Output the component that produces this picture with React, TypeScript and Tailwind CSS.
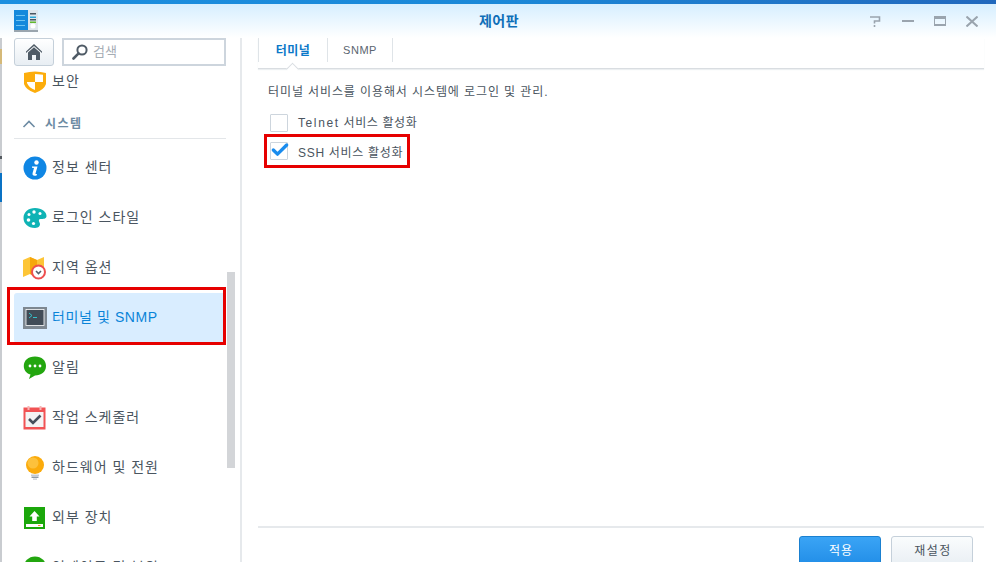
import { ReactNode } from 'react';
import { Check } from 'lucide-react';

const FONT = "font-['Liberation_Sans','Noto_Sans_CJK_KR',sans-serif]";

function ShieldIcon() {
  return (
    <svg width="24" height="24" viewBox="0 0 24 24">
      <path d="M1 3 Q12 0 23 3 V14 Q21 20 12 23 Q3 20 1 14 Z" fill="#fcad0c" />
      <path d="M12 4 L20 4.8 V12 H12 Z M12 12 V20 Q6 18 4 13 V12 Z" fill="#fff" />
    </svg>
  );
}

function InfoIcon() {
  return (
    <svg width="24" height="24" viewBox="0 0 24 24">
      <circle cx="12" cy="12" r="11.5" fill="#0f86e4" />
      <circle cx="13.5" cy="6.5" r="2.2" fill="#fff" />
      <path d="M9 10.5 H14.5 L12.5 17.5 Q12.3 18.4 14 18 L13.6 19.4 Q8.8 20.4 9.6 17 L11 12 L9 11.8 Z" fill="#fff" />
    </svg>
  );
}

function PaletteIcon() {
  return (
    <svg width="24" height="24" viewBox="0 0 24 24">
      <path d="M12 2 C19 2 23.5 6 23.5 10 C23.5 13 20 13 17.5 13 C15.5 13 15.5 15 16.5 16.5 C18 19 16 22 12 22 C5 22 0.5 17.5 0.5 12 C0.5 6 5.5 2 12 2 Z" fill="#0fb3b5" />
      <circle cx="5.5" cy="14" r="1.8" fill="#fff" />
      <circle cx="6" cy="8.5" r="1.5" fill="#fff" />
      <circle cx="11" cy="6" r="1.7" fill="#fff" />
      <circle cx="17" cy="7.5" r="1.5" fill="#fff" />
      <circle cx="10.5" cy="17.5" r="1.6" fill="#fff" />
    </svg>
  );
}

function MapIcon() {
  return (
    <svg width="24" height="24" viewBox="0 0 24 24">
      <path d="M0 4 L7 1 L14 4 L21 1 V17 L14 21 L7 18 L0 21 Z" fill="#fdc537" />
      <path d="M7 1 L14 4 V21 L7 18 Z" fill="#f6a70c" />
      <circle cx="15.5" cy="16" r="6.5" fill="#fff" stroke="#ee4f4f" strokeWidth="2" />
      <path d="M13 15 L15.5 17.5 L18 15" fill="none" stroke="#55606c" strokeWidth="1.6" />
    </svg>
  );
}

function TerminalIcon() {
  return (
    <svg width="24" height="24" viewBox="0 0 24 24">
      <rect width="24" height="22" y="1" fill="#7d8790" />
      <rect x="3" y="3.5" width="18" height="16" fill="#414c57" stroke="#fff" strokeWidth="0.8" />
      <path d="M6 7 L9 9.5 L6 12" fill="none" stroke="#35c3cc" strokeWidth="1" />
      <rect x="10" y="11" width="4" height="1" fill="#35c3cc" />
    </svg>
  );
}

function BubbleIcon() {
  return (
    <svg width="24" height="24" viewBox="0 0 24 24">
      <path d="M12 0.5 C19 0.5 23 4.5 23 10 C23 16 18 19.5 12 19.5 L6 23 L7.5 18.6 C3 17 0.8 14 0.8 10 C0.8 4.5 5 0.5 12 0.5 Z" fill="#23a60f" />
      <circle cx="7" cy="10" r="1.4" fill="#fff" />
      <circle cx="12" cy="10" r="1.4" fill="#fff" />
      <circle cx="17" cy="10" r="1.4" fill="#fff" />
    </svg>
  );
}

function CalendarIcon() {
  return (
    <svg width="24" height="24" viewBox="0 0 24 24">
      <rect x="0.5" y="1.5" width="22" height="22" fill="#f15354" />
      <rect x="2.5" y="6" width="18" height="15" fill="#f4f4f4" />
      <rect x="4.5" y="0" width="2" height="4" fill="#f8b3b3" />
      <rect x="16.5" y="0" width="2" height="4" fill="#f8b3b3" />
      <path d="M6 13 L10 17 L17.5 9.5" fill="none" stroke="#454f5b" strokeWidth="2.6" />
    </svg>
  );
}

function BulbIcon() {
  return (
    <svg width="24" height="24" viewBox="0 0 24 24">
      <circle cx="12" cy="9" r="9" fill="#fbab0b" />
      <circle cx="10" cy="7" r="5.5" fill="#fdc13c" />
      <rect x="8" y="18.5" width="8" height="1.5" fill="#c2c9d0" />
      <rect x="8.5" y="20.5" width="7" height="1.5" fill="#8f9aa5" />
      <rect x="10" y="22.5" width="4" height="1.2" fill="#c2c9d0" />
    </svg>
  );
}

function UploadIcon() {
  return (
    <svg width="24" height="24" viewBox="0 0 24 24">
      <rect x="1" y="1" width="21" height="22" fill="#1ba70b" />
      <path d="M11.5 5 L16.5 10.5 H13.8 V15 H9.2 V10.5 H6.5 Z" fill="#fff" />
      <rect x="3" y="18" width="17" height="3" fill="#fff" />
      <rect x="15" y="19" width="2.5" height="1" fill="#f0a020" />
    </svg>
  );
}

function DotIcon() {
  return (
    <svg width="24" height="24" viewBox="0 0 24 24">
      <circle cx="12" cy="12" r="11.5" fill="#23a60f" />
    </svg>
  );
}

function AppLogo() {
  return (
    <svg width="24" height="22" viewBox="0 0 24 22">
      <rect x="0" y="0" width="14" height="20" fill="#1589dc" />
      <rect x="14" y="0" width="10" height="20" fill="#dfe6ec" />
      <rect x="2" y="5" width="9" height="1" fill="#6fc4f2" />
      <rect x="2" y="10" width="9" height="1" fill="#6fc4f2" />
      <rect x="2" y="15" width="9" height="1" fill="#6fc4f2" />
      <rect x="16" y="3" width="6" height="1.5" fill="#4a5560" />
      <rect x="16" y="6.5" width="6" height="1.5" fill="#2aa7d8" />
      <rect x="16" y="9" width="6" height="1.5" fill="#4a5560" />
      <rect x="16" y="11.5" width="6" height="1.5" fill="#63b82e" />
      <circle cx="19" cy="16" r="2.5" fill="#fff" />
      <rect x="0" y="20" width="24" height="2" fill="#9aa5ae" />
    </svg>
  );
}

function HomeIcon() {
  return (
    <svg width="16" height="16" viewBox="0 0 16 16">
      <path d="M8 0 L16 7.5 V9 L8 2 L0 9 V7.5 Z" fill="#4f5b66" />
      <path d="M8 3.2 L14 8.6 V16 H10 V11 H6 V16 H2 V8.6 Z" fill="#4f5b66" />
    </svg>
  );
}

function SearchGlyph() {
  return (
    <svg width="16" height="16" viewBox="0 0 16 16" fill="none" stroke="#4f5b66">
      <circle cx="10" cy="6" r="4.6" strokeWidth="2" />
      <path d="M6.6 9.4 L1.5 14.5" strokeWidth="2.6" strokeLinecap="round" />
    </svg>
  );
}

function MenuItem({ icon, label, active }: { icon: ReactNode; label: string; active?: boolean }) {
  return (
    <div className={`h-[50px] flex items-center rounded-[3px] pl-[9px] gap-[5px] ${active ? 'bg-[#d9edff] text-[#0a84d8]' : 'text-[#4a5560]'}`}>
      <div className="w-[24px] h-[24px] flex items-center justify-center shrink-0">{icon}</div>
      <span className={`text-[14px] pb-[2px] whitespace-nowrap ${active ? 'tracking-[0.6px]' : 'tracking-[1px]'}`}>{label}</span>
    </div>
  );
}

export default function App() {
  return (
    <div className={`${FONT} w-[996px] h-[562px] overflow-hidden bg-white flex flex-col`}>
      <div className="h-[4px] shrink-0 bg-gradient-to-r from-[#1b8fe0] via-[#1a88d8] to-[#2168bd]" />

      {/* title bar */}
      <div className="h-[34px] shrink-0 bg-gradient-to-b from-[#d6eeff] to-[#ffffff] flex items-center pl-[14px] pr-[18px]">
        <div className="w-[166px]">
          <AppLogo />
        </div>
        <div className="flex-1 text-center text-[14px] font-bold text-[#0f6fb8] tracking-[0.5px]">제어판</div>
        <div className="w-[160px] flex items-center justify-end gap-[20px]">
          <svg width="12" height="11" viewBox="0 0 12 11" fill="none" stroke="#9aa4ae" strokeWidth="1.6" className="-translate-x-[1px]">
            <path d="M1 1 H10.5 V5 H5.5 V7.5" />
            <path d="M5.5 9 V11" />
          </svg>
          <span className="w-[12px] h-[2px] bg-[#9aa4ae]" />
          <span className="w-[12px] h-[10px] border border-[#9aa4ae] border-t-[3px] border-b-[2px]" />
          <svg width="12" height="11" viewBox="0 0 12 11" stroke="#9aa4ae" strokeWidth="2">
            <path d="M0.5 0.5 L11.5 10.5 M11.5 0.5 L0.5 10.5" />
          </svg>
        </div>
      </div>

      <div className="flex-1 flex min-h-0">
        {/* sidebar */}
        <div className="w-[242px] shrink-0 border-l-2 border-r-2 border-l-[#c9ccd0] border-r-[#e6e9ec] flex flex-col pl-[12px] relative">
          {/* desktop showing through at the window edge */}
          <div className="absolute left-[-2px] top-[11px] w-[2px] h-[15px] bg-[#d5b978]" />
          <div className="absolute left-[-2px] top-[118px] w-[2px] h-[3px] bg-[#555b60]" />
          <div className="absolute left-[-2px] top-[135px] w-[2px] h-[29px] bg-[#0a72c4]" />

          <div className="h-[28px] shrink-0 flex gap-[8px] pr-[14px]">
            <button className="w-[40px] h-[28px] border border-[#c5d0da] rounded-[3px] bg-gradient-to-b from-[#ffffff] to-[#e8eef3] flex items-center justify-center">
              <HomeIcon />
            </button>
            <div className="w-[164px] h-[28px] border-2 border-[#cdd5dd] flex items-center pl-[8px] gap-[5px]">
              <SearchGlyph />
              <span className="text-[13px] text-[#a5adb5]">검색</span>
            </div>
          </div>

          <div className="flex-1 min-h-0 overflow-hidden pr-[14px]">
            <div className="-mt-[9px]">
              <MenuItem icon={<ShieldIcon />} label="보안" />
              <div className="h-[32px] mb-[4px] flex items-center pl-[8px] gap-[9px] pt-[3px] border-b border-[#e3e6e9] text-[#6d8ba3] font-bold text-[12px] tracking-[1.5px]">
                <svg width="14" height="8" viewBox="0 0 14 8" fill="none" stroke="#6d8ba3" strokeWidth="1.6">
                  <path d="M1.5 7 L7 1.5 L12.5 7" />
                </svg>
                <span>시스템</span>
              </div>
              <MenuItem icon={<InfoIcon />} label="정보 센터" />
              <MenuItem icon={<PaletteIcon />} label="로그인 스타일" />
              <MenuItem icon={<MapIcon />} label="지역 옵션" />
              <MenuItem icon={<TerminalIcon />} label="터미널 및 SNMP" active />
              <MenuItem icon={<BubbleIcon />} label="알림" />
              <MenuItem icon={<CalendarIcon />} label="작업 스케줄러" />
              <MenuItem icon={<BulbIcon />} label="하드웨어 및 전원" />
              <MenuItem icon={<UploadIcon />} label="외부 장치" />
              <MenuItem icon={<DotIcon />} label="업데이트 및 복원" />
            </div>
          </div>

          {/* scrollbar */}
          <div className="absolute left-[225px] top-[234px] w-[8px] h-[196px] bg-[#d3d5d8]" />
          {/* red highlight */}
          <div className="absolute left-[5px] top-[249px] w-[219px] h-[58px] border-[3px] border-[#e60000]" />
        </div>

        {/* content */}
        <div className="flex-1 min-w-0 flex flex-col pl-[16px] pr-[12px]">
          <div className="h-[31px] shrink-0 border-b border-[#d9dde1] shadow-[0_1px_1px_#eceff1] flex relative">
            <div className="h-[24px] w-[70px] pt-[1px] border-l border-r border-[#dfe4e8] flex items-center justify-center text-[12px] font-bold text-[#0a78c8] tracking-[0.5px]">터미널</div>
            <div className="h-[24px] w-[65px] pt-[1px] border-r border-[#dfe4e8] flex items-center justify-center text-[11px] text-[#5a6570] tracking-[0.5px]">SNMP</div>
            <div className="absolute left-[30px] bottom-[-1px] w-[9px] h-[9px] rotate-45 translate-y-[4.5px] bg-white border-l border-t border-[#d9dde1]" />
          </div>

          <p className="mt-[14px] ml-[10px] text-[12px] text-[#4a5560] tracking-[0.9px]">터미널 서비스를 이용해서 시스템에 로그인 및 관리.</p>

          <div className="mt-[13px] ml-[12px] flex items-center gap-[10px] h-[18px]">
            <div className="w-[18px] h-[18px] border border-[#cdd5dd] rounded-[1px]" />
            <span className="text-[12px] text-[#4a5560] tracking-[0.6px]"><span className="tracking-[1.6px]">Telnet</span> 서비스 활성화</span>
          </div>

          <div className="relative mt-[2px] ml-[6px] w-[146px] h-[34px] border-[3px] border-[#e60000] flex items-center pl-[3px] gap-[10px]">
            <div className="relative w-[18px] h-[18px] border border-[#cdd5dd] rounded-[1px]">
              <Check size={20} strokeWidth={4} className="absolute left-[-1px] top-[-3px] text-[#1a8cee]" />
            </div>
            <span className="pt-[3px] text-[12px] text-[#4a5560] tracking-[0.7px] whitespace-nowrap">SSH 서비스 활성화</span>
          </div>

          <div className="flex-1" />

          <div className="h-[36px] shrink-0 border-t-2 border-[#e6e9ec] flex justify-end gap-[10px] pt-[8px] pr-[11px]">
            <button className="w-[82px] h-[32px] rounded-t-[3px] border border-[#1a80d0] bg-gradient-to-b from-[#3aa4f5] to-[#1f8ce6] text-white text-[12px] tracking-[1px] pl-[2px] pb-[3px]">적용</button>
            <button className="w-[82px] h-[32px] rounded-t-[3px] border border-[#c5d0da] bg-gradient-to-b from-[#fafcfd] to-[#e8eef3] text-[#4a5560] text-[12px] tracking-[1.5px] pl-[2px] pb-[3px]">재설정</button>
          </div>
        </div>
      </div>
    </div>
  );
}
